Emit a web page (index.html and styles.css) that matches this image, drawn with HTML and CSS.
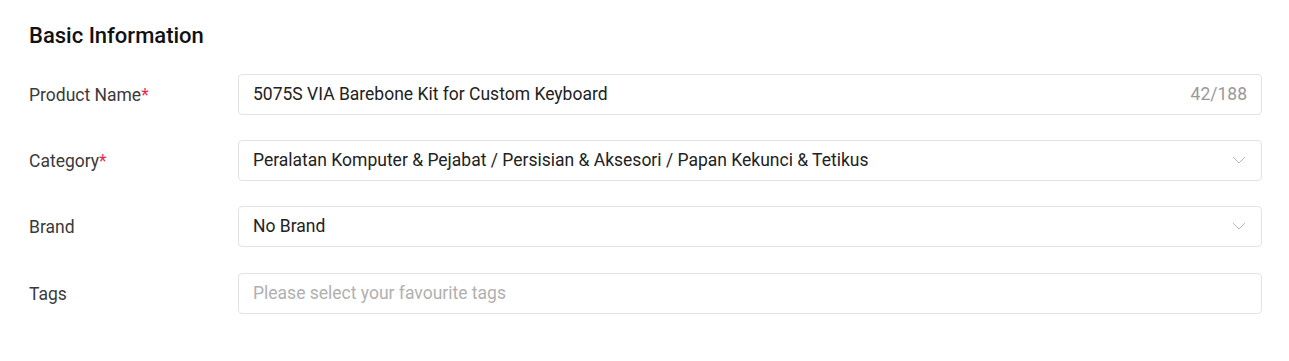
FILE: index.html
```html
<!DOCTYPE html>
<html lang="en">
<head>
  <meta charset="UTF-8">
  <title>Basic Information</title>
  <link rel="stylesheet" href="styles.css">
</head>
<body>
  <div class="panel">
    <h2 class="panel-title">Basic Information</h2>
    <div class="form-row">
      <div class="form-label">Product Name<span class="req">*</span></div>
      <div class="field">
        <span class="field-value">5075S VIA Barebone Kit for Custom Keyboard</span>
        <span class="counter">42/188</span>
      </div>
    </div>
    <div class="form-row">
      <div class="form-label">Category<span class="req">*</span></div>
      <div class="field">
        <span class="field-value">Peralatan Komputer &amp; Pejabat / Persisian &amp; Aksesori / Papan Kekunci &amp; Tetikus</span>
        <svg class="chevron" width="14" height="8" viewBox="0 0 14 8"><path d="M1 1l6 6 6-6" fill="none" stroke="#b7b7b7" stroke-width="1"/></svg>
      </div>
    </div>
    <div class="form-row">
      <div class="form-label">Brand</div>
      <div class="field">
        <span class="field-value">No Brand</span>
        <svg class="chevron" width="14" height="8" viewBox="0 0 14 8"><path d="M1 1l6 6 6-6" fill="none" stroke="#b7b7b7" stroke-width="1"/></svg>
      </div>
    </div>
    <div class="form-row">
      <div class="form-label">Tags</div>
      <div class="field">
        <span class="field-value placeholder">Please select your favourite tags</span>
      </div>
    </div>
  </div>
</body>
</html>
```

FILE: styles.css
```css
body {
  margin: 0;
  background: #fff;
  font-family: Roboto, "Liberation Sans", sans-serif;
  color: #222;
}
.panel {
  padding: 23px 27px 0 29px;
}
.panel-title {
  margin: 0 0 25px;
  font-size: 22px;
  line-height: 26px;
  font-weight: 500;
  color: #111;
}
.form-row {
  display: flex;
  align-items: center;
  margin-bottom: 25px;
}
.form-row:last-child {
  margin-top: 26px;
}
.form-label {
  width: 209px;
  flex-shrink: 0;
  font-size: 17.5px;
  color: #3a3a3a;
}
.req {
  color: #ee2c4a;
}
.field {
  flex: 1;
  height: 41px;
  box-sizing: border-box;
  border: 1px solid #e2e2e2;
  border-radius: 4px;
  display: flex;
  align-items: center;
  padding: 0 14px 1px;
}
.field-value {
  flex: 1;
  font-size: 17.5px;
  color: #222;
}
.placeholder {
  color: #b0b0b0;
}
.counter {
  font-size: 17.5px;
  color: #999;
}
.chevron {
  margin-right: 1px;
}
```
